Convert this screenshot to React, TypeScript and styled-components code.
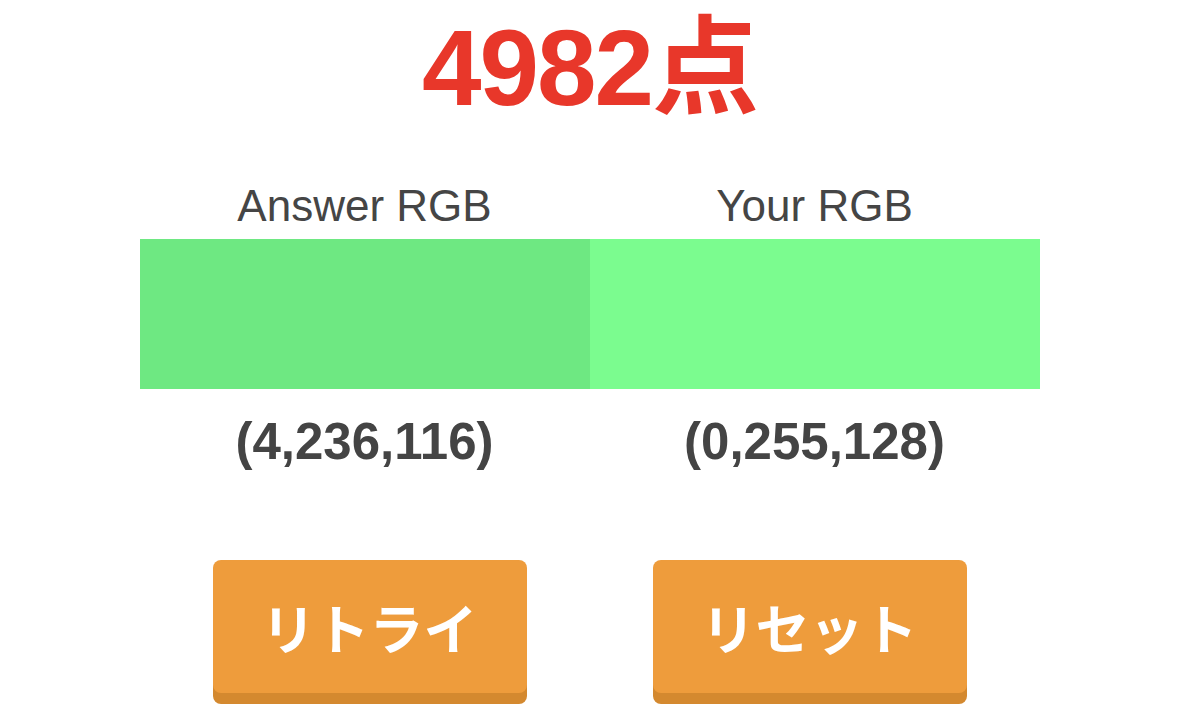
import React from "react";
import styled, { createGlobalStyle } from "styled-components";

const Global = createGlobalStyle`
  html, body { margin: 0; padding: 0; background: #ffffff; }
  body { font-family: "Liberation Sans", Arial, "Noto Sans CJK JP", sans-serif; }
`;

const Page = styled.div`
  width: 1179px;
  height: 714px;
  overflow: hidden;
  display: flex;
  flex-direction: column;
  align-items: center;
`;

const Score = styled.h1`
  margin: 14px 0 0;
  font-family: "Liberation Sans", Arial, "Noto Sans CJK JP", sans-serif;
  font-weight: 700;
  font-size: 107px;
  line-height: 108px;
  color: #e8372a;
  letter-spacing: -2px;
`;

const Compare = styled.div`
  margin-top: 59px;
  width: 900px;
  display: grid;
  grid-template-columns: 1fr 1fr;
`;

const Column = styled.div`
  display: flex;
  flex-direction: column;
  align-items: center;
`;

const Label = styled.div`
  font-size: 44px;
  line-height: 50px;
  color: #454545;
  letter-spacing: 0;
`;

const Swatch = styled.div<{ $color: string }>`
  margin-top: 8px;
  align-self: stretch;
  height: 150px;
  background: ${(p) => p.$color};
`;

const Value = styled.div`
  margin-top: 23px;
  font-weight: 700;
  font-size: 51px;
  line-height: 60px;
  color: #444444;
`;

const Buttons = styled.div`
  margin-top: 88px;
  display: flex;
  gap: 126px;
`;

const Button = styled.button`
  width: 314px;
  height: 133px;
  border: none;
  border-radius: 8px;
  background: #ee9c3c;
  box-shadow: 0 11px 0 #d4892f;
  color: #ffffff;
  font-family: "Noto Sans CJK JP", sans-serif;
  font-weight: 700;
  font-size: 54px;
  padding: 0;
  display: flex;
  align-items: center;
  justify-content: center;
  cursor: pointer;
`;

export default function App() {
  return (
    <>
      <Global />
      <Page>
        <Score>4982点</Score>
        <Compare>
          <Column>
            <Label>Answer RGB</Label>
            <Swatch $color="#6ee882" />
            <Value>(4,236,116)</Value>
          </Column>
          <Column>
            <Label>Your RGB</Label>
            <Swatch $color="#7bfc8f" />
            <Value>(0,255,128)</Value>
          </Column>
        </Compare>
        <Buttons>
          <Button>リトライ</Button>
          <Button>リセット</Button>
        </Buttons>
      </Page>
    </>
  );
}
